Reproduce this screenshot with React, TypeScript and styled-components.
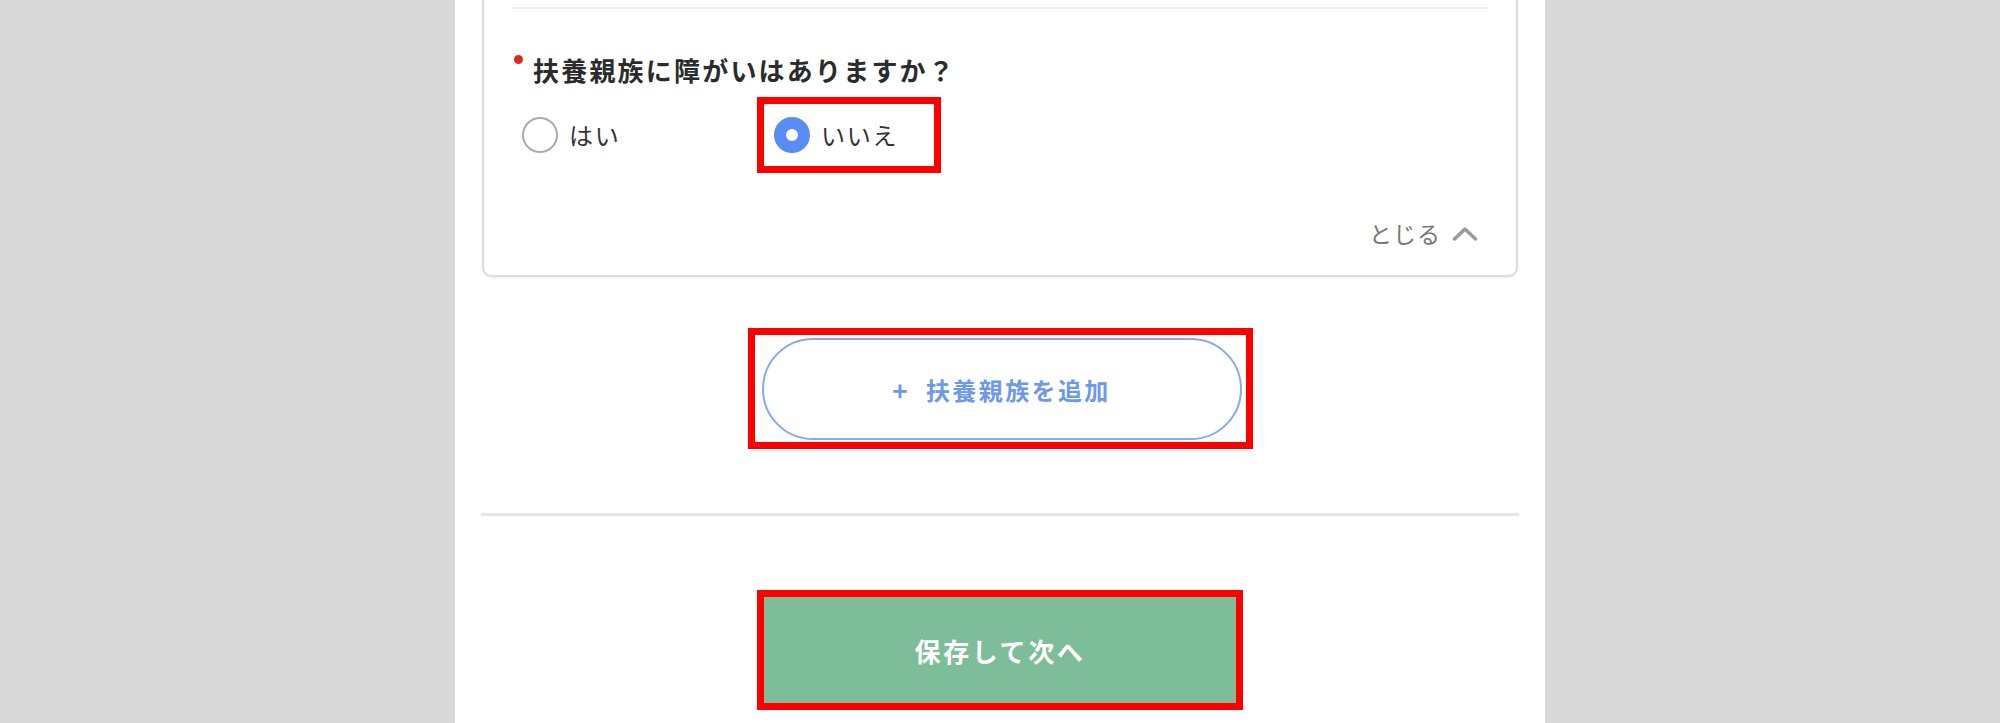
import React from "react";
import styled, { createGlobalStyle } from "styled-components";

const GlobalStyle = createGlobalStyle`
  html, body {
    margin: 0;
    padding: 0;
    background: #d9d9d9;
    font-family: "Noto Sans CJK JP", "Noto Sans", sans-serif;
    color: #333;
  }
  * { box-sizing: border-box; }
`;

const Panel = styled.main`
  width: 1090px;
  min-height: 100vh;
  margin: 0 auto;
  background: #fff;
  padding: 0 27px;
  display: flex;
  flex-direction: column;
`;

const Card = styled.section`
  border: 2px solid #dedede;
  border-top: none;
  border-radius: 0 0 10px 10px;
  box-shadow: 0 1px 2px rgba(0, 0, 0, 0.08);
  padding: 7px 28px 26px;
  display: flex;
  flex-direction: column;
`;

const Divider = styled.div`
  height: 2px;
  background: #f0f0f0;
`;

const Question = styled.div`
  display: flex;
  align-items: flex-start;
  margin-top: 43px;
  padding-left: 2px;
`;

const RequiredDot = styled.span`
  width: 9px;
  height: 9px;
  border-radius: 50%;
  background: #e0261b;
  margin-top: 3px;
  margin-right: 10px;
  flex: none;
`;

const QuestionText = styled.span`
  font-size: 26px;
  line-height: 36px;
  font-weight: 700;
  color: #2b2b2b;
  letter-spacing: 2.2px;
`;

const OptionRow = styled.div`
  display: flex;
  align-items: center;
  margin-top: 9px;
`;

const Option = styled.label<{ $width?: number }>`
  display: flex;
  align-items: center;
  gap: 11px;
  width: ${(p) => (p.$width ? `${p.$width}px` : "auto")};
  padding-left: 10px;
  font-size: 24px;
  line-height: 36px;
  color: #333;
  letter-spacing: 1.8px;
`;

const Highlight = styled.div<{ $pad?: string }>`
  border: 7px solid #ff0000;
  padding: ${(p) => p.$pad || "0"};
  display: flex;
  justify-content: center;
`;

const Radio = styled.span<{ $checked?: boolean }>`
  width: 36px;
  height: 36px;
  border-radius: 50%;
  flex: none;
  border: ${(p) => (p.$checked ? "12px solid #5a8cf5" : "2px solid #acacac")};
  background: #fff;
`;

const CloseRow = styled.div`
  display: flex;
  justify-content: flex-end;
  align-items: center;
  gap: 11px;
  margin-top: 44px;
  padding-right: 10px;
  font-size: 23px;
  line-height: 32px;
  color: #777;
  letter-spacing: 1px;
`;

const AddSection = styled.div`
  display: flex;
  justify-content: center;
  margin-top: 51px;
`;

const AddButton = styled.button`
  width: 480px;
  height: 102px;
  border-radius: 51px;
  border: 2px solid #85aaf2;
  background: #fff;
  color: #6d98ec;
  font-family: inherit;
  font-size: 24px;
  font-weight: 700;
  letter-spacing: 2.4px;
  display: flex;
  align-items: center;
  justify-content: center;
  gap: 16px;
`;

const Plus = styled.span`
  font-size: 26px;
  font-weight: 700;
`;

const Rule = styled.hr`
  margin: 64px -1px 0;
  border: none;
  height: 3px;
  background: #e6e6e6;
`;

const SaveSection = styled.div`
  display: flex;
  justify-content: center;
  margin-top: 74px;
`;

const SaveButton = styled.button`
  width: 472px;
  height: 106px;
  border: none;
  background: #7dbd99;
  color: #fff;
  font-family: inherit;
  font-size: 26px;
  font-weight: 700;
  letter-spacing: 2.6px;
`;

const Chevron = () => (
  <svg width="26" height="15" viewBox="0 0 26 15" aria-hidden="true">
    <polyline
      points="2.5,13 13,3 23.5,13"
      fill="none"
      stroke="#9a9a9a"
      strokeWidth="3.5"
      strokeLinecap="round"
      strokeLinejoin="round"
    />
  </svg>
);

export default function App() {
  return (
    <>
      <GlobalStyle />
      <Panel>
        <Card>
          <Divider />
          <Question>
            <RequiredDot />
            <QuestionText>扶養親族に障がいはありますか？</QuestionText>
          </Question>
          <OptionRow>
            <Option $width={245}>
              <Radio />
              はい
            </Option>
            <Highlight $pad="13px 36px 13px 0">
              <Option>
                <Radio $checked />
                いいえ
              </Option>
            </Highlight>
          </OptionRow>
          <CloseRow>
            <span>とじる</span>
            <Chevron />
          </CloseRow>
        </Card>
        <AddSection>
          <Highlight $pad="3px 4px 2px 7px">
            <AddButton>
              <Plus>+</Plus>
              <span>扶養親族を追加</span>
            </AddButton>
          </Highlight>
        </AddSection>
        <Rule />
        <SaveSection>
          <Highlight>
            <SaveButton>保存して次へ</SaveButton>
          </Highlight>
        </SaveSection>
      </Panel>
    </>
  );
}
